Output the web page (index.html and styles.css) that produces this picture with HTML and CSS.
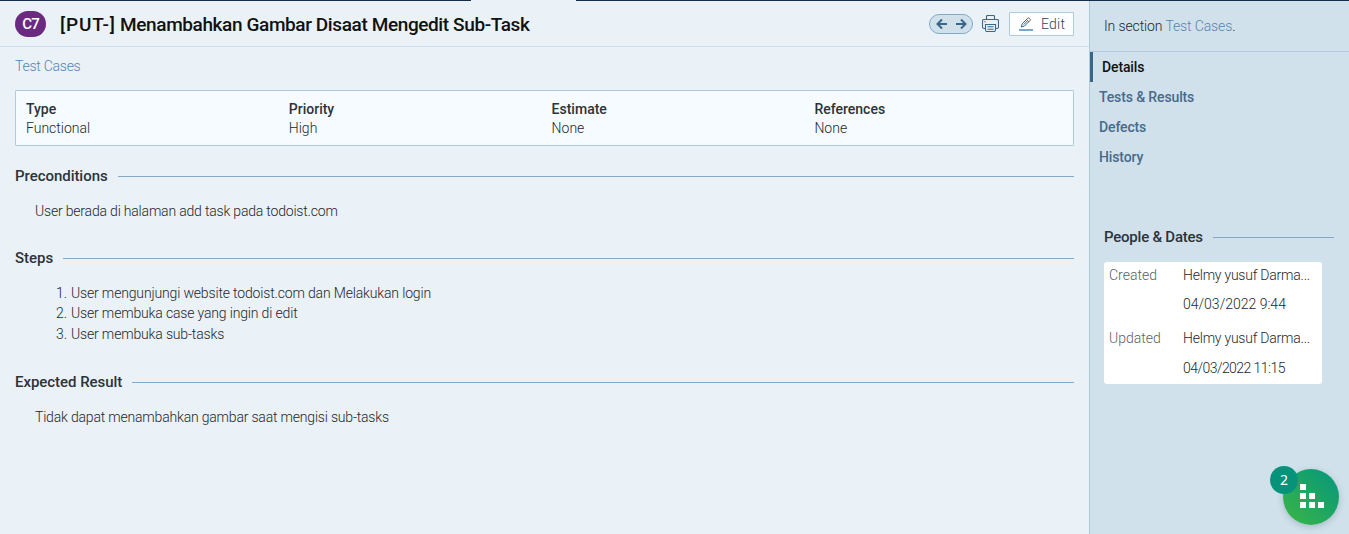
FILE: index.html
```
<!DOCTYPE html>
<html lang="id">
<head>
<meta charset="utf-8">
<title>C7 - Test Case</title>
<link rel="stylesheet" href="styles.css">
</head>
<body>
<div class="topline"><span class="topline-tab"></span></div>
<div class="page">
  <main class="main">
    <header class="header">
      <span class="badge">C7</span>
      <h1 class="title"><span class="title-tag">[PUT-]</span> <span>Menambahkan Gambar Disaat Mengedit Sub-Task</span></h1>
      <div class="toolbar">
        <div class="pager">
          <svg width="12" height="12" viewBox="0 0 12 12"><path d="M11 6H2M6 1.500L1.500 6L6 10.500"/></svg>
          <svg width="12" height="12" viewBox="0 0 12 12"><path d="M1 6H10M6 1.500L10.500 6L6 10.500"/></svg>
        </div>
        <svg class="printer" width="17" height="17" viewBox="0 0 17 17"><path d="M4.500 4.500V1.500Q4.500.5 5.500.5H11.500Q12.500.5 12.500 1.500V4.500M3.500 13.500H2Q.5 13.500.5 12V6Q.5 4.500 2 4.500H15Q16.500 4.500 16.500 6V12Q16.500 13.500 15 13.500H13.500M3.500 9.500H13.500V15Q13.500 16.500 12 16.500H5Q3.500 16.500 3.500 15ZM5.500 11.800H11.500M5.500 14.200H11.500M2.300 6.700H3.700"/></svg>
        <div class="edit">
          <svg width="14" height="14" viewBox="0 0 14 14"><path class="pencil" d="M2.300 10L3.200 6.800L8.700 1.300Q9.500.5 10.300 1.200L11 1.900Q11.700 2.700 11 3.500L5.500 9L2.300 10ZM7.600 2.500L9.800 4.700M4.800 7.500L8.300 4"/><path class="pencil-line" d="M0 13H14"/></svg>
          <span>Edit</span>
        </div>
      </div>
    </header>
    <div class="crumb">Test Cases</div>
    <section class="fields">
      <div><b>Type</b><span>Functional</span></div>
      <div><b>Priority</b><span>High</span></div>
      <div><b>Estimate</b><span>None</span></div>
      <div><b>References</b><span>None</span></div>
    </section>
    <h2 class="heading">Preconditions</h2>
    <p class="text">User berada di halaman add task pada todoist.com</p>
    <h2 class="heading">Steps</h2>
    <ol class="steps">
      <li><i>1.</i><span>User mengunjungi website todoist.com dan Melakukan login</span></li>
      <li><i>2.</i><span>User membuka case yang ingin di edit</span></li>
      <li><i>3.</i><span>User membuka sub-tasks</span></li>
    </ol>
    <h2 class="heading">Expected Result</h2>
    <p class="text">Tidak dapat menambahkan gambar saat mengisi sub-tasks</p>
  </main>
  <aside class="side">
    <div class="section">In section <a>Test Cases</a>.</div>
    <nav class="nav">
      <a class="active">Details</a>
      <a>Tests &amp; Results</a>
      <a>Defects</a>
      <a>History</a>
    </nav>
    <h2 class="heading side-heading">People &amp; Dates</h2>
    <dl class="people">
      <dt>Created</dt><dd>Helmy yusuf Darma...</dd>
      <dt></dt><dd class="date">04/03/2022 9:44</dd>
      <dt>Updated</dt><dd>Helmy yusuf Darma...</dd>
      <dt></dt><dd class="date date-tight">04/03/2022 11:15</dd>
    </dl>
  </aside>
</div>
<div class="beacon">
  <svg width="26" height="26" viewBox="0 0 26 26"><path d="M0 0h6v6H0zM0 9h6v6H0zM9 9h6v6H9zM0 18h6v6H0zM9 18h6v6H9zM18 18h6v6H18z"/></svg>
  <span class="count">2</span>
</div>
</body>
</html>
```
FILE: styles.css
```
* { box-sizing: border-box; }
body {
  margin: 0;
  height: 534px;
  overflow: hidden;
  background: #eaf1f7;
  color: #23272c;
  font: 300 14px/20px Roboto, "Liberation Sans", sans-serif;
  letter-spacing: 0;
}
.topline { height: 1px; background: #152c4b; padding-left: 471px; display: flex; }
.topline-tab { width: 105px; background: #eaf1f7; }
.page { display: grid; grid-template-columns: 1089px 1fr; height: 533px; }
.main { padding: 0 15px; }
.header {
  display: flex;
  align-items: center;
  height: 46px;
  margin: 0 -15px;
  padding: 0 15px;
  border-bottom: 1px solid #cfdfea;
}
.badge {
  width: 31px;
  height: 26px;
  border-radius: 13px;
  background: #6a2a80;
  color: #fff;
  font-weight: 500;
  font-size: 15px;
  letter-spacing: -0.8px;
  line-height: 26px;
  text-align: center;
}
.title { margin: 0 0 0 14px; padding-top: 2px; font-size: 19px; line-height: 24px; font-weight: 500; color: #111; letter-spacing: -0.39px; white-space: nowrap; }
.title-tag { letter-spacing: 0.85px; }
.toolbar { margin-left: auto; display: flex; align-items: center; }
.pager {
  display: flex;
  align-items: center;
  justify-content: space-between;
  width: 44px;
  height: 20px;
  padding: 0 5px 0 6px;
  border: 1px solid #82aac8;
  border-radius: 10px;
  background: #d1e1eb;
}
.pager svg { fill: none; stroke: #3a6688; stroke-width: 2; }
.printer { margin: 0 10px 0 9px; fill: none; stroke: #3a6688; stroke-width: 1.1; }
.edit {
  display: flex;
  align-items: center;
  width: 65px;
  height: 24px;
  padding-left: 9px;
  gap: 8px;
  border: 1px solid #aecadd;
  border-radius: 1px;
  background: #fff;
  color: #2e4558;
  letter-spacing: 0.25px;
}
.pencil { fill: none; stroke: #3a6688; stroke-width: 1; }
.pencil-line { stroke: #79a8cb; stroke-width: 2; }
.crumb { margin-top: 9px; color: #5684b3; letter-spacing: -0.25px; }
.fields {
  display: grid;
  grid-template-columns: repeat(4, 262.8px);
  height: 56px;
  margin-top: 14px;
  padding: 8px 10px;
  border: 1px solid #aecadd;
  border-radius: 1px;
  background: #f6fbff;
}
.fields b, .fields span { display: block; }
.fields b { font-weight: 500; color: #2d3339; letter-spacing: 0; }
.fields span { margin-top: -1px; }
.heading {
  display: flex;
  align-items: center;
  margin: 20px 0 0;
  font-size: 15px;
  line-height: 20px;
  font-weight: 500;
  letter-spacing: -0.04px;
  color: #2d3339;
}
.heading::after { content: ""; flex: 1; height: 1px; margin: 1px 0 0 10px; background: #82aac8; }
.text { margin: 15px 0 0 20px; padding-bottom: 7px; letter-spacing: -0.19px; }
.steps { list-style: none; margin: 15px 0 0; padding: 0 0 8.1px 41px; line-height: 20.3px; letter-spacing: -0.16px; }
.steps li { display: flex; }
.steps i { width: 15px; font-style: normal; letter-spacing: 0; }
.side { border-left: 1px solid #aecadd; background: #d1e1eb; }
.section { height: 51px; padding: 15px 14px 0; border-bottom: 1px solid #aecadd; letter-spacing: -0.12px; }
.section a { color: #5684b3; }
.nav a { display: block; height: 30px; padding-left: 9px; line-height: 30px; font-weight: 500; letter-spacing: -0.13px; color: #486a8c; }
.nav .active { border-left: 3px solid #3a6688; color: #111; }
.side-heading { margin: 55px 15px 0 14px; letter-spacing: -0.23px; }
.people {
  display: grid;
  grid-template-columns: 74px 1fr;
  grid-template-rows: 29px 34px 30px 20px;
  width: 218px;
  height: 122px;
  margin: 15px 0 0 14px;
  padding: 3px 5px;
  border-radius: 3px;
  background: #fff;
}
.people dt { color: #5a5f64; }
.people dd { margin: 0; white-space: nowrap; letter-spacing: -0.22px; }
.people .date { letter-spacing: 0; }
.people .date-tight { letter-spacing: -0.55px; }
.beacon {
  position: absolute;
  left: 1283px;
  top: 469px;
  width: 56px;
  height: 56px;
  padding: 15px 0 0 17px;
  border-radius: 50%;
  background: linear-gradient(45deg, #37b34a 10%, #07987a 95%);
  box-shadow: 0 2px 6px rgba(30, 70, 90, 0.25);
}
.beacon svg { display: block; fill: #fff; }
.count {
  position: absolute;
  left: -13px;
  top: -3px;
  width: 28px;
  height: 28px;
  border-radius: 50%;
  background: #07937a;
  color: #fff;
  font: 400 14px/27px "Noto Sans", sans-serif;
  text-align: center;
}
```
